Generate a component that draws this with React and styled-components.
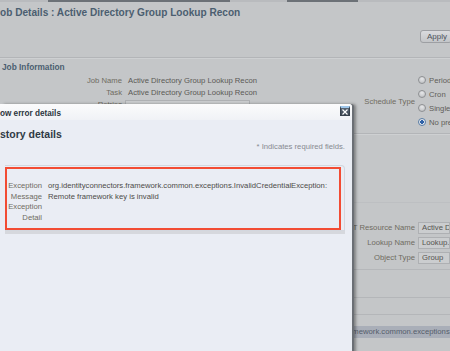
import React from 'react';
import styled, { createGlobalStyle } from 'styled-components';

const GlobalStyle = createGlobalStyle`
  html, body {
    margin: 0;
    padding: 0;
    overflow: hidden;
    background: #c4c6c8;
  }
  body {
    font-family: "Liberation Sans", Arial, sans-serif;
  }
`;

const Page = styled.div`
  position: relative;
  width: 450px;
  height: 351px;
  overflow: hidden;
  background: #c4c6c8;
  font-size: 7.7px;
  color: #5e5c57;
`;

const TopStrip = styled.div`
  display: flex;
  height: 2px;
  background: #b9bbbe;
`;

const StripTab = styled.div`
  margin-left: ${p => p.$left}px;
  width: ${p => p.$width}px;
  background: #6c7177;
`;

const Title = styled.h1`
  margin: 4px 0 0 -5.6px;
  font-size: 10.1px;
  line-height: 14px;
  font-weight: bold;
  color: #4b5e70;
  white-space: nowrap;
`;

const Toolbar = styled.div`
  display: flex;
  justify-content: flex-end;
  padding: 10px 0 14px;
`;

const Button = styled.div`
  flex: none;
  width: 32px;
  height: 13px;
  margin-right: -2px;
  box-sizing: border-box;
  padding-left: 6px;
  border: 1px solid #9d9fa3;
  border-radius: 3px;
  background: linear-gradient(#dadbde, #c3c5c8);
  font-size: 8px;
  line-height: 11px;
  color: #4c525b;
`;

const Divider = styled.div`
  height: 1px;
  background: #b3b5b8;
  border-bottom: 1px solid #ced0d2;
`;

const Section = styled.div`
  padding-top: 2px;
  height: 74px;
  box-sizing: border-box;
`;

const SectionTitle = styled.div`
  margin-left: 2px;
  font-size: 8.3px;
  line-height: 12px;
  font-weight: bold;
  color: #4b5e70;
`;

const InfoGrid = styled.div`
  display: flex;
  align-items: flex-start;
`;

const FieldList = styled.div`
  padding-top: 2px;
`;

const FieldRow = styled.div`
  display: flex;
  gap: 6px;
  line-height: 12px;
  white-space: nowrap;
`;

const Label = styled.div`
  flex: none;
  width: ${p => p.$width}px;
  text-align: right;
  color: #6f6b61;
`;

const Value = styled.div`
  color: #5a5955;
`;

const InputBox = styled.div`
  width: ${p => p.$width}px;
  height: 12px;
  margin: 1px 0 0 ${p => p.$shift || 0}px;
  box-sizing: border-box;
  border: 1px solid #aeb0b3;
  background: #cbcdcf;
  padding-left: 3px;
  line-height: 10px;
  color: #55544f;
  overflow: hidden;
  white-space: nowrap;
`;

const ScheduleGroup = styled.div`
  margin-left: auto;
  display: flex;
  align-items: center;
  gap: 3px;
`;

const RadioList = styled.div`
  width: 32px;
  white-space: nowrap;
`;

const RadioRow = styled.div`
  display: flex;
  align-items: center;
  gap: 3px;
  height: 14px;
  color: #5f5d58;
`;

const Radio = styled.span`
  flex: none;
  width: 8px;
  height: 8px;
  box-sizing: border-box;
  border-radius: 50%;
  border: 1px solid ${p => (p.$checked ? '#5a7ea6' : '#8e9093')};
  background: ${p =>
    p.$checked
      ? 'radial-gradient(circle, #2f62a8 0 1.6px, #e4e8ee 2px)'
      : 'radial-gradient(circle at 50% 30%, #e6e7e9, #b9bbbe)'};
`;

const LowerArea = styled.div`
  height: 67px;
  border-bottom: 1px solid #bdbfc2;
`;

const ParamForm = styled.div`
  padding-top: 17px;
  height: 49px;
  border-bottom: 1px solid #b5b7ba;
`;

const ParamRow = styled.div`
  display: flex;
  align-items: center;
  gap: 3px;
  height: 15px;
  white-space: nowrap;
`;

const Band = styled.div`
  height: ${p => p.$height}px;
  border-bottom: 1px solid #b4b6b9;
`;

const ErrorBar = styled.div`
  margin-top: 11px;
  height: 12px;
  background: #a9aeb8;
  padding-left: 266px;
  line-height: 12px;
  white-space: nowrap;
  color: #555d6b;
`;

const Dialog = styled.div`
  position: absolute;
  left: 0;
  top: 104px;
  width: 352px;
  height: 260px;
  border-top-right-radius: 3px;
  background: #eaedf4;
  box-shadow: 2px 0 0 #6b6f75, 4px 0 3px rgba(0, 0, 0, 0.35);
  display: flex;
  flex-direction: column;
`;

const DialogHeader = styled.div`
  display: flex;
  justify-content: space-between;
  align-items: flex-start;
  height: 16px;
  padding: 2px 2px 0 0;
  box-sizing: border-box;
  background: linear-gradient(#fbfbfc, #f0f2f6);
  border-top-right-radius: 3px;
`;

const DialogTitle = styled.div`
  margin: 3px 0 0 -10.5px;
  font-size: 8.2px;
  line-height: 10px;
  font-weight: bold;
  color: #2d3640;
`;

const CloseButton = styled.div`
  width: 10px;
  height: 10px;
  box-sizing: border-box;
  border: 1px solid #36404b;
  border-top: 2px solid #9ec6ea;
  background: linear-gradient(#5a6674, #3b4552);
  display: flex;
  align-items: center;
  justify-content: center;
`;

const DialogBody = styled.div`
  padding: 7px 7px 0 0;
`;

const Heading = styled.h2`
  margin: 0 0 0 -10.5px;
  font-size: 10.5px;
  line-height: 14px;
  font-weight: bold;
  color: #2f3a45;
`;

const RequiredNote = styled.div`
  margin-top: 1px;
  text-align: right;
  line-height: 10px;
  color: #878a90;
`;

const Panel = styled.div`
  margin: 13px 0 0 5px;
  padding: 1px 3px 0 0;
  border: 1px solid #d3d7de;
  border-left: none;
  border-radius: 0 4px 0 0;
  box-shadow: 0 3px 0 #d6d8dd;
`;

const Highlight = styled.div`
  border: 2px solid #f24c33;
  padding: 12px 0 5px;
`;

const DetailRow = styled.div`
  display: flex;
  gap: 6px;
  line-height: 10.5px;
`;

const DetailValue = styled.div`
  flex: 1;
  color: #4c4b48;
  word-break: normal;
`;

export default function App() {
  return (
    <>
      <GlobalStyle />
      <Page>
        <TopStrip>
          <StripTab $left={48} $width={182} />
          <StripTab $left={57} $width={71} />
        </TopStrip>
        <Title>Job Details : Active Directory Group Lookup Recon</Title>
        <Toolbar>
          <Button>Apply</Button>
        </Toolbar>
        <Divider />
        <Section>
          <SectionTitle>Job Information</SectionTitle>
          <InfoGrid>
            <FieldList>
              <FieldRow>
                <Label $width={122}>Job Name</Label>
                <Value>Active Directory Group Lookup Recon</Value>
              </FieldRow>
              <FieldRow>
                <Label $width={122}>Task</Label>
                <Value>Active Directory Group Lookup Recon</Value>
              </FieldRow>
              <FieldRow>
                <Label $width={122}>Retries</Label>
                <InputBox $width={125} $shift={-3} />
              </FieldRow>
            </FieldList>
            <ScheduleGroup>
              <Label>Schedule Type</Label>
              <RadioList>
                <RadioRow><Radio />Periodic</RadioRow>
                <RadioRow><Radio />Cron</RadioRow>
                <RadioRow><Radio />Single</RadioRow>
                <RadioRow><Radio $checked />No pre-defined schedule</RadioRow>
              </RadioList>
            </ScheduleGroup>
          </InfoGrid>
        </Section>
        <Divider />
        <LowerArea />
        <ParamForm>
          <ParamRow>
            <Label $width={415}>IT Resource Name</Label>
            <InputBox $width={60}>Active Directory</InputBox>
          </ParamRow>
          <ParamRow>
            <Label $width={415}>Lookup Name</Label>
            <InputBox $width={60}>Lookup.ActiveDirectory.Groups</InputBox>
          </ParamRow>
          <ParamRow>
            <Label $width={415}>Object Type</Label>
            <InputBox $width={60}>Group</InputBox>
          </ParamRow>
        </ParamForm>
        <Band $height={27} />
        <Band $height={16} />
        <ErrorBar>
          org.identityconnectors.framework.common.exceptions.InvalidCredentialException: Remote framework key is invalid
        </ErrorBar>

        <Dialog>
          <DialogHeader>
            <DialogTitle>Show error details</DialogTitle>
            <CloseButton>
              <svg width="6" height="6" viewBox="0 0 6 6">
                <path d="M0.5 0.5 L5.5 5.5 M5.5 0.5 L0.5 5.5" stroke="#ffffff" strokeWidth="1.2" />
              </svg>
            </CloseButton>
          </DialogHeader>
          <DialogBody>
            <Heading>History details</Heading>
            <RequiredNote>* Indicates required fields.</RequiredNote>
            <Panel>
              <Highlight>
                <DetailRow>
                  <Label $width={35}>Exception Message</Label>
                  <DetailValue>
                    org.identityconnectors.framework.common.exceptions.InvalidCredentialException: Remote framework key is invalid
                  </DetailValue>
                </DetailRow>
                <DetailRow>
                  <Label $width={35}>Exception Detail</Label>
                  <DetailValue />
                </DetailRow>
              </Highlight>
            </Panel>
          </DialogBody>
        </Dialog>
      </Page>
    </>
  );
}
